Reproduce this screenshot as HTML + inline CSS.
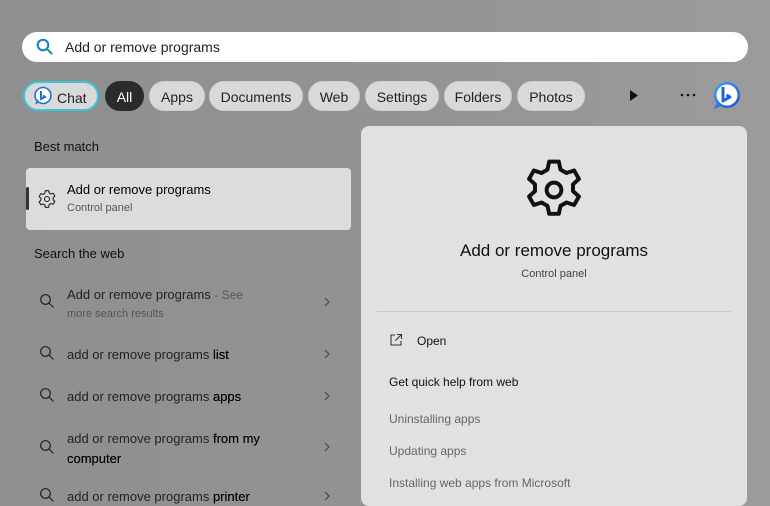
<!DOCTYPE html>
<html><head><style>
*{margin:0;padding:0;box-sizing:border-box}
body{width:770px;height:501px;overflow:hidden;background:linear-gradient(90deg,#8f8f8f,#939393 50%,#9b9b9b);font-family:"Liberation Sans",sans-serif;color:#1a1a1a;position:relative}
.a{position:absolute;white-space:nowrap}
.search{left:22px;top:32px;width:726px;height:30px;background:#fff;border-radius:15px}
.pill{position:absolute;top:81px;height:30px;border-radius:15px;background:#d9d9d9;font-size:14px;line-height:30px;text-align:center;color:#222;border:1px solid #cfcfcf}
.panel{left:361px;top:126px;width:386px;height:380px;background:#e1e1e1;border-radius:8px}
.card{left:26px;top:168px;width:325px;height:62px;background:#dcdcdc;border-radius:4px}
.t13{font-size:13px}
.wt{font-size:13px;color:#222}
.wt b{font-weight:normal;color:#000;text-shadow:0 0 .3px #000}
</style></head><body>
<div class="a search"></div>
<svg class="a" style="left:36px;top:38px" width="17" height="17" viewBox="0 0 17 17"><circle cx="7" cy="7" r="5.3" fill="none" stroke="#1a7bd0" stroke-width="2"/><path d="M11 11l4.5 4.5" stroke="#1aa07a" stroke-width="2.2" stroke-linecap="round"/></svg>
<div class="a" style="left:65px;top:39px;font-size:14px;color:#222">Add or remove programs</div>

<div class="pill" style="left:23px;width:76px;border:2px solid #3cc6d8;text-align:left;padding-left:32px">Chat</div>
<svg class="a" style="left:33px;top:86px" width="20" height="20" viewBox="0 0 20 20"><circle cx="10" cy="9.5" r="8" fill="#fff" stroke="#1f6fd6" stroke-width="1.6"/><path d="M3 18l2-4" stroke="#1f6fd6" stroke-width="1.6"/><path d="M8 5v8l4-2-2-1.5" fill="none" stroke="#1f6fd6" stroke-width="2"/></svg>
<div class="pill" style="left:105px;width:39px;background:#2b2b2b;color:#fff;border-color:#2b2b2b">All</div>
<div class="pill" style="left:149px;width:56px">Apps</div>
<div class="pill" style="left:209px;width:94px">Documents</div>
<div class="pill" style="left:308px;width:52px">Web</div>
<div class="pill" style="left:365px;width:74px">Settings</div>
<div class="pill" style="left:444px;width:68px">Folders</div>
<div class="pill" style="left:517px;width:68px">Photos</div>
<svg class="a" style="left:629px;top:89px" width="10" height="13"><path d="M1 1l8 5.5L1 12z" fill="#111"/></svg>
<svg class="a" style="left:680px;top:93px" width="16" height="4"><circle cx="2" cy="2" r="1.3" fill="#111"/><circle cx="8" cy="2" r="1.3" fill="#111"/><circle cx="14" cy="2" r="1.3" fill="#111"/></svg>
<svg class="a" style="left:711px;top:80px" width="32" height="32" viewBox="0 0 32 32"><defs><linearGradient id="g" x1="0" y1="0" x2="1" y2="1"><stop offset="0" stop-color="#37a6ff"/><stop offset="1" stop-color="#1e4fd8"/></linearGradient></defs><circle cx="16" cy="15" r="13" fill="url(#g)"/><path d="M5 23l-2 6 7-3z" fill="url(#g)"/><circle cx="16" cy="15" r="10.5" fill="#fff"/><path d="M12 7v14l7-4-3.5-2" fill="none" stroke="#1e66e0" stroke-width="3" stroke-linejoin="round"/></svg>

<div class="a t13" style="left:34px;top:139px;color:#111">Best match</div>
<div class="a card"></div>
<div class="a" style="left:26px;top:187px;width:3px;height:23px;background:#333;border-radius:2px"></div>
<svg class="a" style="left:37px;top:189px" width="20" height="20" viewBox="0 0 24 24"><path d="M10 2h4l.6 2.8 2.1 1.2 2.7-.9 2 3.5-2.1 1.9v2.4l2.1 1.9-2 3.5-2.7-.9-2.1 1.2L14 22h-4l-.6-2.8-2.1-1.2-2.7.9-2-3.5 2.1-1.9v-2.4L2.6 9.1l2-3.5 2.7.9 2.1-1.2z" fill="none" stroke="#222" stroke-width="1.3" stroke-linejoin="round"/><circle cx="12" cy="12" r="3" fill="none" stroke="#222" stroke-width="1.3"/></svg>
<div class="a" style="left:67px;top:182px;font-size:13px;color:#000">Add or remove programs</div>
<div class="a" style="left:67px;top:202px;font-size:11px;color:#555">Control panel</div>

<div class="a t13" style="left:34px;top:246px;color:#111">Search the web</div>

<svg class="a" style="left:39px;top:293px" width="16" height="16"><circle cx="6.5" cy="6.5" r="4.8" fill="none" stroke="#222" stroke-width="1.2"/><path d="M10 10l4.5 4.5" stroke="#222" stroke-width="1.2"/></svg>
<div class="a wt" style="left:67px;top:287px">Add or remove programs <span style="font-size:12px;color:#555">- See</span></div>
<div class="a" style="left:67px;top:308px;font-size:11px;color:#555">more search results</div>
<svg class="a" style="left:324px;top:297px" width="6" height="10"><path d="M1 1l4 4-4 4" fill="none" stroke="#444" stroke-width="1.1"/></svg>

<svg class="a" style="left:39px;top:345px" width="16" height="16"><circle cx="6.5" cy="6.5" r="4.8" fill="none" stroke="#222" stroke-width="1.2"/><path d="M10 10l4.5 4.5" stroke="#222" stroke-width="1.2"/></svg>
<div class="a wt" style="left:67px;top:347px">add or remove programs <b>list</b></div>
<svg class="a" style="left:324px;top:349px" width="6" height="10"><path d="M1 1l4 4-4 4" fill="none" stroke="#444" stroke-width="1.1"/></svg>

<svg class="a" style="left:39px;top:387px" width="16" height="16"><circle cx="6.5" cy="6.5" r="4.8" fill="none" stroke="#222" stroke-width="1.2"/><path d="M10 10l4.5 4.5" stroke="#222" stroke-width="1.2"/></svg>
<div class="a wt" style="left:67px;top:389px">add or remove programs <b>apps</b></div>
<svg class="a" style="left:324px;top:391px" width="6" height="10"><path d="M1 1l4 4-4 4" fill="none" stroke="#444" stroke-width="1.1"/></svg>

<svg class="a" style="left:39px;top:439px" width="16" height="16"><circle cx="6.5" cy="6.5" r="4.8" fill="none" stroke="#222" stroke-width="1.2"/><path d="M10 10l4.5 4.5" stroke="#222" stroke-width="1.2"/></svg>
<div class="a wt" style="left:67px;top:431px">add or remove programs <b>from my</b></div>
<div class="a wt" style="left:67px;top:451px"><b>computer</b></div>
<svg class="a" style="left:324px;top:442px" width="6" height="10"><path d="M1 1l4 4-4 4" fill="none" stroke="#444" stroke-width="1.1"/></svg>

<svg class="a" style="left:39px;top:487px" width="16" height="16"><circle cx="6.5" cy="6.5" r="4.8" fill="none" stroke="#222" stroke-width="1.2"/><path d="M10 10l4.5 4.5" stroke="#222" stroke-width="1.2"/></svg>
<div class="a wt" style="left:67px;top:489px">add or remove programs <b>printer</b></div>
<svg class="a" style="left:324px;top:491px" width="6" height="10"><path d="M1 1l4 4-4 4" fill="none" stroke="#444" stroke-width="1.1"/></svg>

<div class="a panel"></div>
<svg class="a" style="left:520px;top:156px" width="68" height="68" viewBox="0 0 24 24"><path d="M10.3 2h3.4l.6 2.8 2.1 1.2 2.7-.9 1.7 3-2.1 1.9v2.4l2.1 1.9-1.7 3-2.7-.9-2.1 1.2-.6 2.8h-3.4l-.6-2.8-2.1-1.2-2.7.9-1.7-3 2.1-1.9v-2.4L3.2 8.1l1.7-3 2.7.9 2.1-1.2z" fill="none" stroke="#111" stroke-width="1.4" stroke-linejoin="round"/><circle cx="12" cy="12" r="2.6" fill="none" stroke="#111" stroke-width="1.4"/></svg>
<div class="a" style="left:361px;width:386px;text-align:center;top:241px;font-size:17px;color:#111">Add or remove programs</div>
<div class="a" style="left:361px;width:386px;text-align:center;top:268px;font-size:11px;color:#444">Control panel</div>
<div class="a" style="left:377px;top:311px;width:354px;height:1px;background:#c9c9c9"></div>
<svg class="a" style="left:389px;top:333px" width="14" height="14"><path d="M6 2H2v10h10V8M8 1.5h4.5V6M12.5 1.5L6.5 7.5" fill="none" stroke="#333" stroke-width="1.1"/></svg>
<div class="a" style="left:417px;top:334px;font-size:12px;color:#111">Open</div>
<div class="a" style="left:389px;top:375px;font-size:12px;color:#111">Get quick help from web</div>
<div class="a" style="left:389px;top:412px;font-size:12px;color:#666">Uninstalling apps</div>
<div class="a" style="left:389px;top:444px;font-size:12px;color:#666">Updating apps</div>
<div class="a" style="left:389px;top:476px;font-size:12px;color:#666">Installing web apps from Microsoft</div>
</body></html>
